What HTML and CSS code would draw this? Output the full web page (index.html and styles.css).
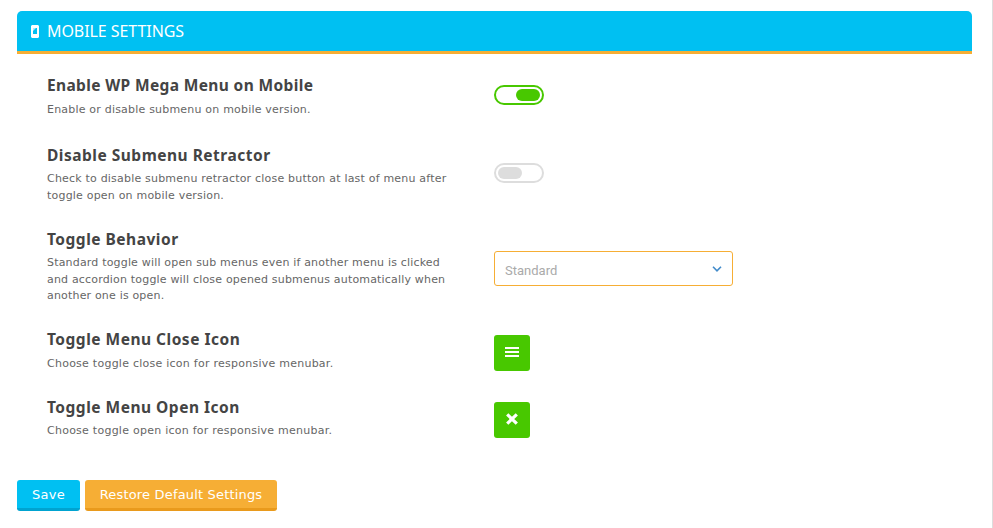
FILE: index.html
```html
<!DOCTYPE html>
<html lang="en">
<head>
<meta charset="utf-8">
<title>Mobile Settings</title>
<link rel="stylesheet" href="styles.css">
</head>
<body>
<main class="panel">
  <h2 class="panel-header">
    <svg class="phone" viewBox="0 0 8 13" width="8" height="13"><path fill="#fff" fill-rule="evenodd" d="M1 0h6l1 1v11l-1 1H1l-1-1V1zM2 3v6h4V3z"/><path fill="#fff" d="M2 3h3L2 6z" opacity=".7"/></svg>
    <span>MOBILE SETTINGS</span>
  </h2>
  <section class="settings">
    <div class="row row-enable">
      <div class="copy">
        <h3>Enable WP Mega Menu on Mobile</h3>
        <p>Enable or disable submenu on mobile version.</p>
      </div>
      <div class="control"><div class="switch on"></div></div>
    </div>
    <div class="row row-retractor">
      <div class="copy">
        <h3>Disable Submenu Retractor</h3>
        <p>Check to disable submenu retractor close button at last of menu after<br>toggle open on mobile version.</p>
      </div>
      <div class="control"><div class="switch"></div></div>
    </div>
    <div class="row row-behavior">
      <div class="copy">
        <h3>Toggle Behavior</h3>
        <p>Standard toggle will open sub menus even if another menu is clicked<br>and accordion toggle will close opened submenus automatically when<br>another one is open.</p>
      </div>
      <div class="control"><div class="select"><span>Standard</span>
        <svg width="10" height="6" viewBox="0 0 10 6"><path d="M1 .8l4 4 4-4" fill="none" stroke="#428bca" stroke-width="1.6"/></svg></div></div>
    </div>
    <div class="row row-close">
      <div class="copy">
        <h3>Toggle Menu Close Icon</h3>
        <p>Choose toggle close icon for responsive menubar.</p>
      </div>
      <div class="control"><div class="icon-button"><svg width="36" height="36"><path fill="#fff" d="M11 12h14v2H11zM11 16h14v2H11zM11 20h14v2H11z"/></svg></div></div>
    </div>
    <div class="row row-open">
      <div class="copy">
        <h3>Toggle Menu Open Icon</h3>
        <p>Choose toggle open icon for responsive menubar.</p>
      </div>
      <div class="control"><div class="icon-button"><svg width="36" height="36"><path stroke="#fff" stroke-width="3.2" d="M13.2 12.4l9.6 9.2M22.8 12.4l-9.6 9.2"/></svg></div></div>
    </div>
  </section>
  <div class="actions">
    <button class="button save">Save</button>
    <button class="button restore">Restore Default Settings</button>
  </div>
</main>
</body>
</html>
```
FILE: styles.css
```css
* { box-sizing: border-box; }
body {
  margin: 0;
  background: #fff;
  font-family: "DejaVu Sans", Verdana, sans-serif;
}
.panel {
  height: 528px;
  padding: 11px 20px 0 17px;
  border-right: 1px solid #ddd;
}
.panel-header {
  display: flex;
  align-items: center;
  height: 43px;
  margin: 0;
  padding: 0 0 0 14px;
  background: #00c0f2;
  border-bottom: 3px solid #f6ae35;
  border-radius: 5px 5px 0 0;
  color: #fff;
  font: 400 16px/20px "Noto Sans", sans-serif;
  letter-spacing: -.07px;
}
.phone { margin-right: 8px; }
.settings { padding: 11px 0 0 30px; }
.row {
  display: grid;
  grid-template-columns: 447px 1fr;
}
.row-enable { height: 70px; }
.row-retractor { height: 84px; }
.row-behavior { height: 100px; }
.row-close { height: 68px; }
.row-open { height: 93px; }
.row-enable .control { padding-top: 20px; }
.row-retractor .control { padding-top: 28px; }
.row-behavior .control { padding-top: 32px; }
.row-close .control { padding-top: 16px; }
.row-open .control { padding-top: 15px; }
.copy { padding-top: 10px; white-space: nowrap; }
h3 {
  margin: 0 0 6px;
  color: #444;
  font: 700 15.5px/20px "Noto Sans", sans-serif;
  letter-spacing: .5px;
}
.row-enable h3 { margin-bottom: 7px; letter-spacing: .36px; }
.row-close h3 { margin-bottom: 7px; }
p {
  margin: 0;
  color: #666;
  font-size: 11px;
  line-height: 16.5px;
  letter-spacing: .2px;
}
.row-close p, .row-open p { letter-spacing: .25px; }
.row-behavior p { letter-spacing: .18px; }
.switch {
  width: 50px;
  height: 20px;
  padding: 2px;
  border: 2px solid #ddd;
  border-radius: 10px;
}
.switch::before {
  content: "";
  display: block;
  width: 24px;
  height: 12px;
  border-radius: 6px;
  background: #ddd;
}
.switch.on { border-color: #48c800; }
.switch.on::before { margin-left: 18px; background: #48c800; }
.select {
  display: flex;
  justify-content: space-between;
  align-items: center;
  width: 239px;
  height: 35px;
  padding: 4px 10px 0 10px;
  border: 1px solid #f6ae35;
  border-radius: 3px;
  color: #aaa;
  font: 13px/18px Roboto, sans-serif;
}
.select svg { margin-top: -4px; }
.icon-button {
  width: 36px;
  height: 36px;
  border-radius: 3px;
  background: #48c800;
}
.icon-button svg { display: block; }
.actions { display: flex; gap: 5px; }
.button {
  height: 31px;
  padding: 1px 0 0;
  border: 0;
  border-radius: 3px;
  color: #fff;
  font: 13px/28px "DejaVu Sans", sans-serif;
  letter-spacing: .17px;
}
.save { width: 63px; background: #00c0f2; border-bottom: 3px solid #00a3d0; letter-spacing: .3px; }
.restore { width: 192px; background: #f6ae35; border-bottom: 3px solid #e99a1c; }
```
